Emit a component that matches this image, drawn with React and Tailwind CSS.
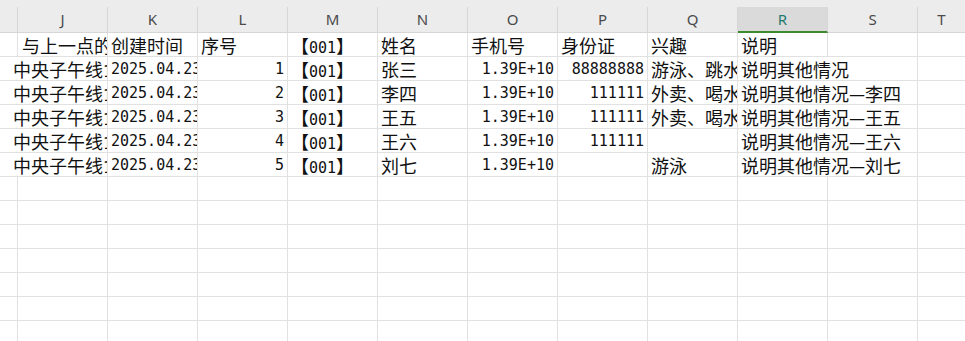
import React from 'react'

const COLS = ['', 'J', 'K', 'L', 'M', 'N', 'O', 'P', 'Q', 'R', 'S', 'T']

const CJK = "font-['Noto_Sans_CJK_SC',sans-serif] text-[18px]"
const MONO = "font-['DejaVu_Sans_Mono',monospace] text-[15px]"

const Num = ({ children }) => <span className={MONO}>{children}</span>

const Code = () => (
  <span className={CJK}>
    【<Num>001</Num>】
  </span>
)

const PEOPLE = [
  { no: '1', name: '张三', id: '88888888', hobby: '游泳、跳水', note: '说明其他情况' },
  { no: '2', name: '李四', id: '111111', hobby: '外卖、喝水', note: '说明其他情况—李四' },
  { no: '3', name: '王五', id: '111111', hobby: '外卖、喝水', note: '说明其他情况—王五' },
  { no: '4', name: '王六', id: '111111', hobby: '', note: '说明其他情况—王六' },
  { no: '5', name: '刘七', id: '', hobby: '游泳', note: '说明其他情况—刘七' },
]

function Cell({ span, right, last, children }) {
  return (
    <div
      className={[
        'flex items-center overflow-hidden whitespace-nowrap border-b border-[#e1e1e1] text-[#111] pt-[2px]',
        last ? '' : 'border-r',
        span === 2 ? 'col-span-2' : '',
        right ? 'justify-end pr-[3px]' : 'pl-[3px]',
      ].join(' ')}
    >
      {children}
    </div>
  )
}

function Row({ children }) {
  return <div className="grid grid-cols-[18px_repeat(10,90px)_1fr] h-[24px]">{children}</div>
}

export default function App() {
  return (
    <div className="w-[965px] h-[341px] overflow-hidden bg-white">
      {/* column letters */}
      <div className="h-[7px] bg-[#ececec]" />
      <div className="grid grid-cols-[18px_repeat(10,90px)_1fr] h-[26px] bg-[#ececec] text-[15px] text-[#4a4a4a] font-['Noto_Sans',sans-serif]">
        {COLS.map((c, i) =>
          c === 'R' ? (
            <div key={i} className="flex items-center justify-center bg-[#dadada] text-[#1e7a6e] border-r border-[#d6d6d6] border-b-2 border-b-[#3d8b2f]">
              {c}
            </div>
          ) : (
            <div
              key={i}
              className={
                i === 11
                  ? 'flex items-center justify-center border-b border-[#d6d6d6] overflow-hidden'
                  : 'flex items-center justify-center border-r border-b border-[#d6d6d6] overflow-hidden'
              }
            >
              {c}
            </div>
          )
        )}
      </div>

      {/* titles */}
      <Row>
        <Cell />
        <Cell><span className={CJK + ' pl-[1px]'}>与上一点的距离</span></Cell>
        <Cell><span className={CJK}>创建时间</span></Cell>
        <Cell><span className={CJK}>序号</span></Cell>
        <Cell><Code /></Cell>
        <Cell><span className={CJK}>姓名</span></Cell>
        <Cell><span className={CJK}>手机号</span></Cell>
        <Cell><span className={CJK}>身份证</span></Cell>
        <Cell><span className={CJK}>兴趣</span></Cell>
        <Cell><span className={CJK}>说明</span></Cell>
        <Cell />
        <Cell last />
      </Row>

      {PEOPLE.map((p) => (
        <Row key={p.no}>
          <Cell span={2}>
            <span className={CJK + ' pl-[10px]'}>
              中央子午线<Num>114</Num>
            </span>
          </Cell>
          <Cell><Num>2025.04.23</Num></Cell>
          <Cell right><Num>{p.no}</Num></Cell>
          <Cell><Code /></Cell>
          <Cell><span className={CJK}>{p.name}</span></Cell>
          <Cell right><Num>1.39E+10</Num></Cell>
          <Cell right><Num>{p.id}</Num></Cell>
          <Cell><span className={CJK}>{p.hobby}</span></Cell>
          <Cell span={2}><span className={CJK}>{p.note}</span></Cell>
          <Cell last />
        </Row>
      ))}

      {Array.from({ length: 7 }).map((_, r) => (
        <Row key={'e' + r}>
          {COLS.map((c, i) => (
            <Cell key={i} last={i === 11} />
          ))}
        </Row>
      ))}
    </div>
  )
}
